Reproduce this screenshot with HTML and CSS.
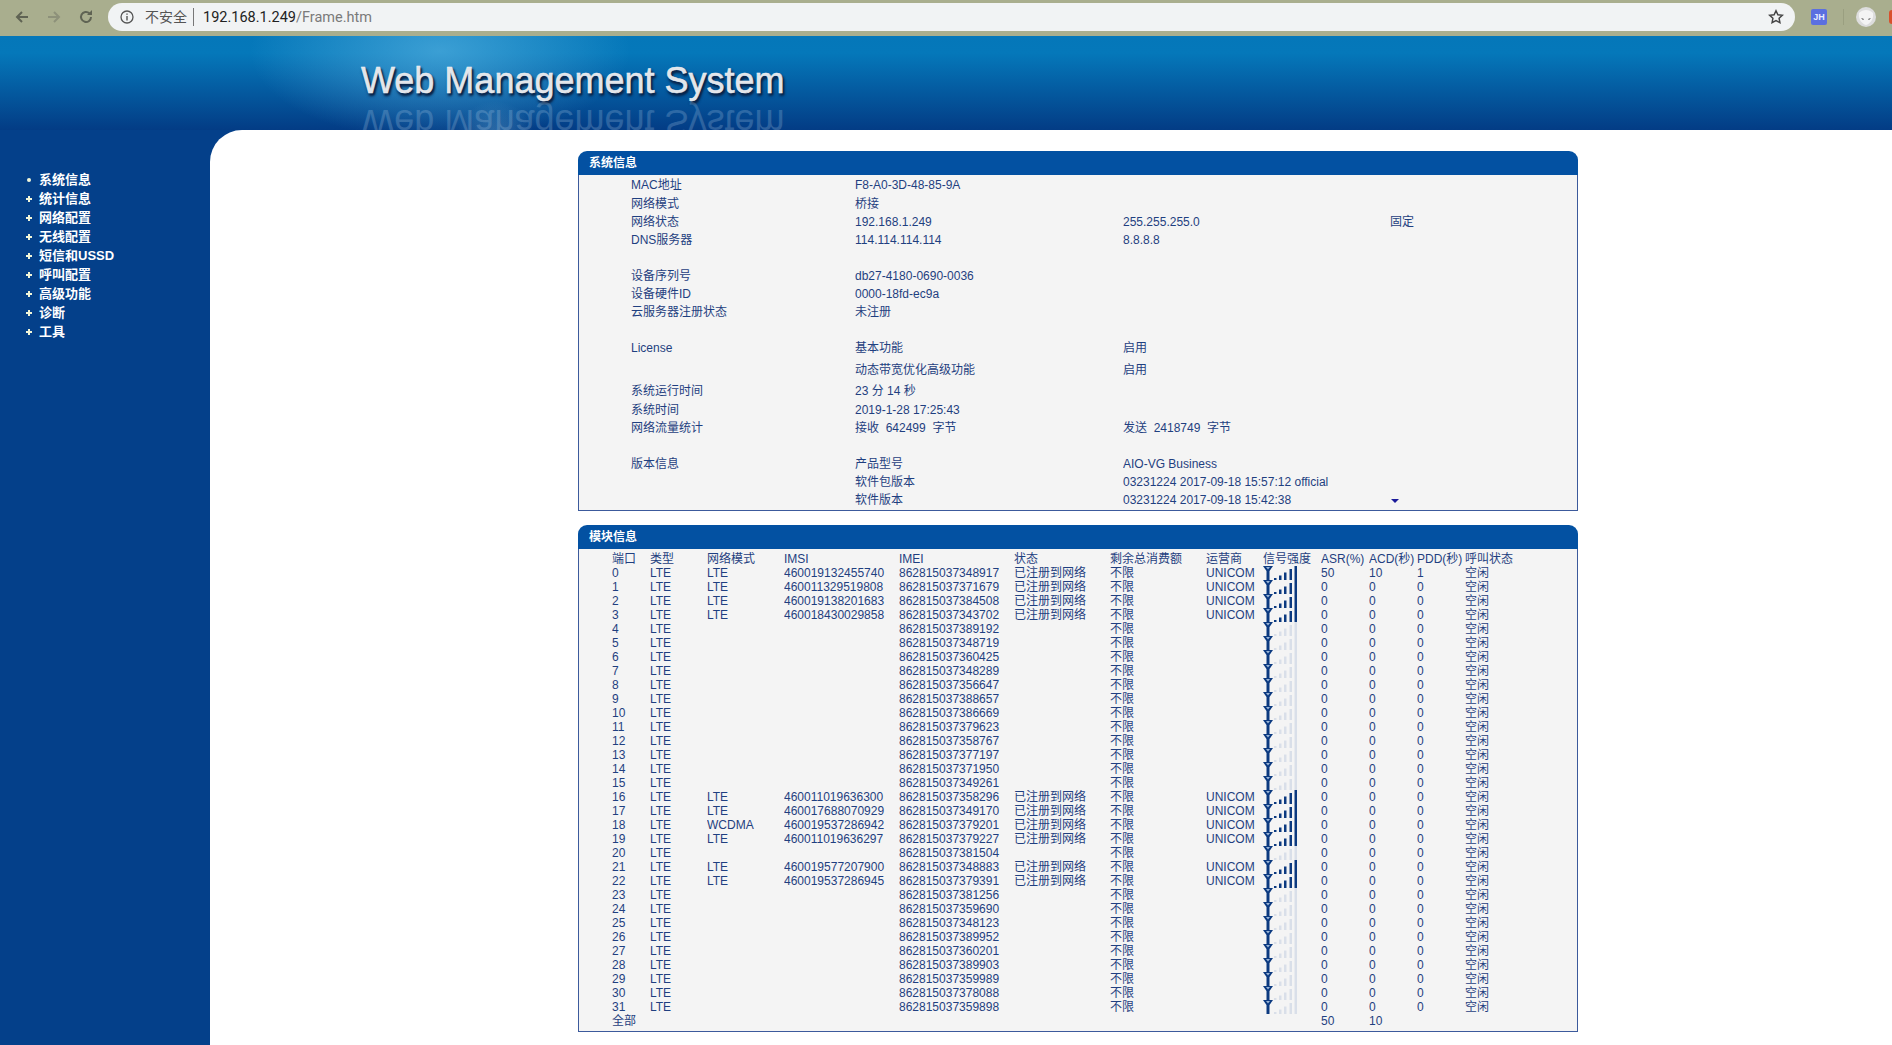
FILE: index.html
```html
<!DOCTYPE html>
<html lang="zh-CN">
<head>
    <meta charset="UTF-8">
    <title>Web Management System</title>
    <link rel="stylesheet" href="styles.css">
</head>
<body>
    <svg class="defs" width="0" height="0">
        <symbol id="sig-on" viewBox="0 0 34 14">
            <path d="M0 0h10L6.500 5v9h-3V5z" fill="#0c3a80"/>
            <path d="M3 1h4L5 3.500z" fill="#9db7d8"/>
            <path d="M11 12h2.500v2H11zM16 9.500h2.500V14H16zM21 6.500h2.500V14H21zM26.500 3H29v11h-2.500zM31.500 0H34v14h-2.500z" fill="#0c3a80"/>
        </symbol>
        <symbol id="sig-off" viewBox="0 0 34 14">
            <path d="M0 0h10L6.500 5v9h-3V5z" fill="#0c3a80"/>
            <path d="M3 1h4L5 3.500z" fill="#9db7d8"/>
            <path d="M11 12h2.500v2H11zM16 9.500h2.500V14H16zM21 6.500h2.500V14H21zM26.500 3H29v11h-2.500zM31.500 0H34v14h-2.500z" fill="#d9dfe9"/>
        </symbol>
    </svg>

    <!-- browser bar -->
    <div class="chrome">
        <div class="nav">
            <svg width="16" height="16" viewBox="0 0 16 16"><path d="M14 8H3M8 3L3 8l5 5" fill="none" stroke="#5f6353" stroke-width="2"/></svg>
            <svg width="16" height="16" viewBox="0 0 16 16"><path d="M2 8h11M8 3l5 5-5 5" fill="none" stroke="#8d917a" stroke-width="2"/></svg>
            <svg width="16" height="16" viewBox="0 0 16 16"><path d="M13 8a5 5 0 1 1-1.600-3.700" fill="none" stroke="#5f6353" stroke-width="2"/><path d="M14 1v5H9z" fill="#5f6353"/></svg>
        </div>
        <div class="omnibox">
            <svg class="info" width="14" height="14" viewBox="0 0 14 14"><circle cx="7" cy="7" r="6" fill="none" stroke="#555" stroke-width="1.300"/><path d="M6.300 6h1.400v4.500H6.300zM6.300 3.400h1.400v1.400H6.300z" fill="#555"/></svg>
            <span class="insecure">不安全</span>
            <span class="url"><b>192.168.1.249</b>/Frame.htm</span>
            <svg class="star" width="16" height="16" viewBox="0 0 16 16"><path d="M8 1.800l1.900 4 4.400.5-3.200 3 .8 4.400L8 11.600l-3.900 2.100.8-4.400-3.200-3 4.400-.5z" fill="none" stroke="#444" stroke-width="1.500"/></svg>
        </div>
        <div class="ext-jh">JH</div>
        <div class="ext-sep"></div>
        <div class="avatar">
            <svg width="20" height="20" viewBox="0 0 20 20"><circle cx="10" cy="10" r="10" fill="#ddd"/><path d="M3 6c4-4 10-4 14 0 1 6-3 11-7 12C6 17 2 12 3 6z" fill="#f4f4f4"/><path d="M5 11l3 1-1 1zM15 11l-3 1 1 1z" fill="#444"/></svg>
        </div>
        <div class="ext-red"></div>
    </div>

    <div class="banner">
        <div class="banner-title">Web Management System</div>
        <div class="banner-mirror" aria-hidden="true">Web Management System</div>
    </div>

    <div class="page">
        <ul class="sidebar">
            <li class="first">系统信息</li>
            <li>统计信息</li>
            <li>网络配置</li>
            <li>无线配置</li>
            <li>短信和USSD</li>
            <li>呼叫配置</li>
            <li>高级功能</li>
            <li>诊断</li>
            <li>工具</li>
        </ul>

        <div class="content">
            <div class="panel">
                <div class="panel-title">系统信息</div>
                <div class="panel-body info-body">
                    <table class="info-table">
                        <colgroup><col class="i1"><col class="i2"><col class="i3"><col class="i4"></colgroup>
                        <tr class="top"><td>MAC地址</td><td>F8-A0-3D-48-85-9A</td><td></td><td></td></tr>
                        <tr><td>网络模式</td><td>桥接</td><td></td><td></td></tr>
                        <tr><td>网络状态</td><td>192.168.1.249</td><td>255.255.255.0</td><td>固定</td></tr>
                        <tr><td>DNS服务器</td><td>114.114.114.114</td><td>8.8.8.8</td><td></td></tr>
                        <tr class="gap"><td colspan="4"></td></tr>
                        <tr><td>设备序列号</td><td>db27-4180-0690-0036</td><td></td><td></td></tr>
                        <tr><td>设备硬件ID</td><td>0000-18fd-ec9a</td><td></td><td></td></tr>
                        <tr><td>云服务器注册状态</td><td>未注册</td><td></td><td></td></tr>
                        <tr class="gap-big"><td colspan="4"></td></tr>
                        <tr><td>License</td><td>基本功能</td><td>启用</td><td></td></tr>
                        <tr class="tall"><td></td><td>动态带宽优化高级功能</td><td>启用</td><td></td></tr>
                        <tr class="mid"><td>系统运行时间</td><td>23 分 14 秒</td><td></td><td></td></tr>
                        <tr><td>系统时间</td><td>2019-1-28 17:25:43</td><td></td><td></td></tr>
                        <tr><td>网络流量统计</td><td>接收&nbsp; 642499&nbsp; 字节</td><td>发送&nbsp; 2418749&nbsp; 字节</td><td></td></tr>
                        <tr class="gap-big"><td colspan="4"></td></tr>
                        <tr><td>版本信息</td><td>产品型号</td><td>AIO-VG Business</td><td></td></tr>
                        <tr><td></td><td>软件包版本</td><td>03231224 2017-09-18 15:57:12 official</td><td></td></tr>
                        <tr><td></td><td>软件版本</td><td>03231224 2017-09-18 15:42:38</td><td><span class="caret"></span></td></tr>
                    </table>
                </div>
            </div>

            <div class="panel">
                <div class="panel-title">模块信息</div>
                <div class="panel-body module-body">
                    <table class="module-table">
                        <colgroup><col class="m1"><col class="m2"><col class="m3"><col class="m4"><col class="m5"><col class="m6"><col class="m7"><col class="m8"><col class="m9"><col class="m10"><col class="m11"><col class="m12"><col></colgroup>
                        <tr><th>端口</th><th>类型</th><th>网络模式</th><th>IMSI</th><th>IMEI</th><th>状态</th><th>剩余总消费额</th><th>运营商</th><th>信号强度</th><th>ASR(%)</th><th>ACD(秒)</th><th>PDD(秒)</th><th>呼叫状态</th></tr>
                        <tr><td>0</td><td>LTE</td><td>LTE</td><td>460019132455740</td><td>862815037348917</td><td>已注册到网络</td><td>不限</td><td>UNICOM</td><td><svg class="sig"><use href="#sig-on"/></svg></td><td>50</td><td>10</td><td>1</td><td>空闲</td></tr>
                        <tr><td>1</td><td>LTE</td><td>LTE</td><td>460011329519808</td><td>862815037371679</td><td>已注册到网络</td><td>不限</td><td>UNICOM</td><td><svg class="sig"><use href="#sig-on"/></svg></td><td>0</td><td>0</td><td>0</td><td>空闲</td></tr>
                        <tr><td>2</td><td>LTE</td><td>LTE</td><td>460019138201683</td><td>862815037384508</td><td>已注册到网络</td><td>不限</td><td>UNICOM</td><td><svg class="sig"><use href="#sig-on"/></svg></td><td>0</td><td>0</td><td>0</td><td>空闲</td></tr>
                        <tr><td>3</td><td>LTE</td><td>LTE</td><td>460018430029858</td><td>862815037343702</td><td>已注册到网络</td><td>不限</td><td>UNICOM</td><td><svg class="sig"><use href="#sig-on"/></svg></td><td>0</td><td>0</td><td>0</td><td>空闲</td></tr>
                        <tr><td>4</td><td>LTE</td><td></td><td></td><td>862815037389192</td><td></td><td>不限</td><td></td><td><svg class="sig"><use href="#sig-off"/></svg></td><td>0</td><td>0</td><td>0</td><td>空闲</td></tr>
                        <tr><td>5</td><td>LTE</td><td></td><td></td><td>862815037348719</td><td></td><td>不限</td><td></td><td><svg class="sig"><use href="#sig-off"/></svg></td><td>0</td><td>0</td><td>0</td><td>空闲</td></tr>
                        <tr><td>6</td><td>LTE</td><td></td><td></td><td>862815037360425</td><td></td><td>不限</td><td></td><td><svg class="sig"><use href="#sig-off"/></svg></td><td>0</td><td>0</td><td>0</td><td>空闲</td></tr>
                        <tr><td>7</td><td>LTE</td><td></td><td></td><td>862815037348289</td><td></td><td>不限</td><td></td><td><svg class="sig"><use href="#sig-off"/></svg></td><td>0</td><td>0</td><td>0</td><td>空闲</td></tr>
                        <tr><td>8</td><td>LTE</td><td></td><td></td><td>862815037356647</td><td></td><td>不限</td><td></td><td><svg class="sig"><use href="#sig-off"/></svg></td><td>0</td><td>0</td><td>0</td><td>空闲</td></tr>
                        <tr><td>9</td><td>LTE</td><td></td><td></td><td>862815037388657</td><td></td><td>不限</td><td></td><td><svg class="sig"><use href="#sig-off"/></svg></td><td>0</td><td>0</td><td>0</td><td>空闲</td></tr>
                        <tr><td>10</td><td>LTE</td><td></td><td></td><td>862815037386669</td><td></td><td>不限</td><td></td><td><svg class="sig"><use href="#sig-off"/></svg></td><td>0</td><td>0</td><td>0</td><td>空闲</td></tr>
                        <tr><td>11</td><td>LTE</td><td></td><td></td><td>862815037379623</td><td></td><td>不限</td><td></td><td><svg class="sig"><use href="#sig-off"/></svg></td><td>0</td><td>0</td><td>0</td><td>空闲</td></tr>
                        <tr><td>12</td><td>LTE</td><td></td><td></td><td>862815037358767</td><td></td><td>不限</td><td></td><td><svg class="sig"><use href="#sig-off"/></svg></td><td>0</td><td>0</td><td>0</td><td>空闲</td></tr>
                        <tr><td>13</td><td>LTE</td><td></td><td></td><td>862815037377197</td><td></td><td>不限</td><td></td><td><svg class="sig"><use href="#sig-off"/></svg></td><td>0</td><td>0</td><td>0</td><td>空闲</td></tr>
                        <tr><td>14</td><td>LTE</td><td></td><td></td><td>862815037371950</td><td></td><td>不限</td><td></td><td><svg class="sig"><use href="#sig-off"/></svg></td><td>0</td><td>0</td><td>0</td><td>空闲</td></tr>
                        <tr><td>15</td><td>LTE</td><td></td><td></td><td>862815037349261</td><td></td><td>不限</td><td></td><td><svg class="sig"><use href="#sig-off"/></svg></td><td>0</td><td>0</td><td>0</td><td>空闲</td></tr>
                        <tr><td>16</td><td>LTE</td><td>LTE</td><td>460011019636300</td><td>862815037358296</td><td>已注册到网络</td><td>不限</td><td>UNICOM</td><td><svg class="sig"><use href="#sig-on"/></svg></td><td>0</td><td>0</td><td>0</td><td>空闲</td></tr>
                        <tr><td>17</td><td>LTE</td><td>LTE</td><td>460017688070929</td><td>862815037349170</td><td>已注册到网络</td><td>不限</td><td>UNICOM</td><td><svg class="sig"><use href="#sig-on"/></svg></td><td>0</td><td>0</td><td>0</td><td>空闲</td></tr>
                        <tr><td>18</td><td>LTE</td><td>WCDMA</td><td>460019537286942</td><td>862815037379201</td><td>已注册到网络</td><td>不限</td><td>UNICOM</td><td><svg class="sig"><use href="#sig-on"/></svg></td><td>0</td><td>0</td><td>0</td><td>空闲</td></tr>
                        <tr><td>19</td><td>LTE</td><td>LTE</td><td>460011019636297</td><td>862815037379227</td><td>已注册到网络</td><td>不限</td><td>UNICOM</td><td><svg class="sig"><use href="#sig-on"/></svg></td><td>0</td><td>0</td><td>0</td><td>空闲</td></tr>
                        <tr><td>20</td><td>LTE</td><td></td><td></td><td>862815037381504</td><td></td><td>不限</td><td></td><td><svg class="sig"><use href="#sig-off"/></svg></td><td>0</td><td>0</td><td>0</td><td>空闲</td></tr>
                        <tr><td>21</td><td>LTE</td><td>LTE</td><td>460019577207900</td><td>862815037348883</td><td>已注册到网络</td><td>不限</td><td>UNICOM</td><td><svg class="sig"><use href="#sig-on"/></svg></td><td>0</td><td>0</td><td>0</td><td>空闲</td></tr>
                        <tr><td>22</td><td>LTE</td><td>LTE</td><td>460019537286945</td><td>862815037379391</td><td>已注册到网络</td><td>不限</td><td>UNICOM</td><td><svg class="sig"><use href="#sig-on"/></svg></td><td>0</td><td>0</td><td>0</td><td>空闲</td></tr>
                        <tr><td>23</td><td>LTE</td><td></td><td></td><td>862815037381256</td><td></td><td>不限</td><td></td><td><svg class="sig"><use href="#sig-off"/></svg></td><td>0</td><td>0</td><td>0</td><td>空闲</td></tr>
                        <tr><td>24</td><td>LTE</td><td></td><td></td><td>862815037359690</td><td></td><td>不限</td><td></td><td><svg class="sig"><use href="#sig-off"/></svg></td><td>0</td><td>0</td><td>0</td><td>空闲</td></tr>
                        <tr><td>25</td><td>LTE</td><td></td><td></td><td>862815037348123</td><td></td><td>不限</td><td></td><td><svg class="sig"><use href="#sig-off"/></svg></td><td>0</td><td>0</td><td>0</td><td>空闲</td></tr>
                        <tr><td>26</td><td>LTE</td><td></td><td></td><td>862815037389952</td><td></td><td>不限</td><td></td><td><svg class="sig"><use href="#sig-off"/></svg></td><td>0</td><td>0</td><td>0</td><td>空闲</td></tr>
                        <tr><td>27</td><td>LTE</td><td></td><td></td><td>862815037360201</td><td></td><td>不限</td><td></td><td><svg class="sig"><use href="#sig-off"/></svg></td><td>0</td><td>0</td><td>0</td><td>空闲</td></tr>
                        <tr><td>28</td><td>LTE</td><td></td><td></td><td>862815037389903</td><td></td><td>不限</td><td></td><td><svg class="sig"><use href="#sig-off"/></svg></td><td>0</td><td>0</td><td>0</td><td>空闲</td></tr>
                        <tr><td>29</td><td>LTE</td><td></td><td></td><td>862815037359989</td><td></td><td>不限</td><td></td><td><svg class="sig"><use href="#sig-off"/></svg></td><td>0</td><td>0</td><td>0</td><td>空闲</td></tr>
                        <tr><td>30</td><td>LTE</td><td></td><td></td><td>862815037378088</td><td></td><td>不限</td><td></td><td><svg class="sig"><use href="#sig-off"/></svg></td><td>0</td><td>0</td><td>0</td><td>空闲</td></tr>
                        <tr><td>31</td><td>LTE</td><td></td><td></td><td>862815037359898</td><td></td><td>不限</td><td></td><td><svg class="sig"><use href="#sig-off"/></svg></td><td>0</td><td>0</td><td>0</td><td>空闲</td></tr>
                        <tr><td>全部</td><td></td><td></td><td></td><td></td><td></td><td></td><td></td><td></td><td>50</td><td>10</td><td></td><td></td></tr>
                    </table>
                </div>
            </div>
        </div>
    </div>
</body>
</html>
```

FILE: styles.css
```css
body {
    margin: 0;
    height: 1045px;
    overflow: hidden;
    background-color: #fff;
    font-family: "Liberation Sans", "Noto Sans CJK SC", sans-serif;
    font-size: 12px;
    color: #1f3f80;
    display: flex;
    flex-direction: column;
}

.defs {
    position: absolute;
}

/* browser bar */
.chrome {
    height: 36px;
    flex: none;
    display: flex;
    align-items: center;
    background-color: #a9ae8e;
    box-sizing: border-box;
    padding: 0 0 2px 14px;
}

.nav {
    display: flex;
    gap: 16px;
    width: 94px;
}

.omnibox {
    width: 1687px;
    height: 28px;
    border-radius: 14px;
    background-color: #f1f3f4;
    display: flex;
    align-items: center;
    font-family: Roboto, "Noto Sans CJK SC", sans-serif;
    color: #555;
}

.info {
    margin-left: 12px;
}

.insecure {
    margin-left: 11px;
    font-size: 14px;
    width: 48px;
    border-right: 1px solid #777;
    line-height: 18px;
}

.url {
    margin-left: 9px;
    font-size: 14.5px;
    color: #7a7a7a;
}

.url b {
    font-weight: 400;
    color: #222;
}

.star {
    margin-left: auto;
    margin-right: 11px;
}

.ext-jh {
    width: 16px;
    height: 16px;
    margin-left: 16px;
    background-color: #5b6fe0;
    color: #e8ecff;
    font-size: 9px;
    font-weight: bold;
    line-height: 16px;
    text-align: center;
    border-radius: 2px;
}

.ext-sep {
    width: 1px;
    height: 16px;
    margin-left: 16px;
    background-color: #9a9f80;
}

.avatar {
    width: 20px;
    height: 20px;
    margin-left: 12px;
}

.ext-red {
    width: 3px;
    height: 14px;
    margin-left: 13px;
    background-color: #d9502c;
    border-radius: 3px 0 0 3px;
}

/* header */
.banner {
    position: relative;
    height: 94px;
    flex: none;
    overflow: hidden;
    box-sizing: border-box;
    padding: 25px 0 0 361px;
    background:
        radial-gradient(ellipse 40px 40px at 495px 105px, rgba(120, 190, 225, 0.4), rgba(120, 190, 225, 0) 100%),
        radial-gradient(ellipse 190px 90px at 440px 15px, rgba(95, 185, 230, 0.6), rgba(95, 185, 230, 0) 100%),
        linear-gradient(#0577b9 0%, #0578ba 18%, #033c85 100%);
}

.banner-title,
.banner-mirror {
    font-size: 36px;
    line-height: 40px;
    white-space: nowrap;
}

.banner-title {
    color: #e2e5ea;
    -webkit-text-stroke: 0.5px #eef0f3;
    text-shadow: 2px 2px 2px #0a2348, 1px 3px 3px #0a2348;
}

.banner-mirror {
    position: absolute;
    left: 361px;
    top: 66px;
    color: #a9c8e4;
    opacity: 0.25;
    transform: scaleY(-1);
}

/* main area */
.page {
    flex: 1;
    display: flex;
    background-color: #04408a;
}

.sidebar {
    width: 210px;
    flex: none;
    box-sizing: border-box;
    margin: 0;
    padding: 40px 0 0 24px;
    list-style: none;
    color: #fff;
    font-size: 13px;
    font-weight: bold;
}

.sidebar li {
    height: 19px;
    line-height: 19px;
    padding-left: 15px;
    position: relative;
}

/* little plus marks in front of the menu */
.sidebar li::before {
    content: "";
    position: absolute;
    left: 2px;
    top: 9px;
    width: 6px;
    height: 2px;
    background-color: #f2f6d8;
}

.sidebar li::after {
    content: "";
    position: absolute;
    left: 4px;
    top: 7px;
    width: 2px;
    height: 6px;
    background-color: #f2f6d8;
}

.sidebar li.first::before {
    left: 3px;
    top: 8px;
    width: 4px;
    height: 4px;
    border-radius: 2px;
}

.sidebar li.first::after {
    display: none;
}

.content {
    flex: 1;
    background-color: #fff;
    border-top-left-radius: 32px;
    padding: 21px 0 0 368px;
}

.panel {
    width: 1000px;
    margin-bottom: 14px;
}

.panel-title {
    height: 24px;
    line-height: 24px;
    padding-left: 11px;
    background-color: #0351a2;
    color: #fff;
    font-weight: bold;
    border-radius: 9px 9px 0 0;
}

.panel-body {
    background-color: #f4f4f4;
    border: 1px solid #3c5a9c;
    border-top: none;
    white-space: nowrap;
}

.info-body {
    height: 336px;
    padding-top: 1px;
    box-sizing: border-box;
}

.module-body {
    height: 483px;
    padding: 3px 0 0 33px;
    box-sizing: border-box;
}

table {
    border-collapse: collapse;
    table-layout: fixed;
    border-spacing: 0;
}

td,
th {
    padding: 0;
    font-weight: normal;
    text-align: left;
    overflow: hidden;
}

.info-table {
    width: 998px;
}

.info-table tr {
    height: 18px;
}

.info-table td {
    line-height: 18px;
}

.info-table tr.top {
    height: 19px;
}

.info-table tr.top td,
.info-table tr.mid td {
    vertical-align: top;
}

.info-table tr.gap {
    height: 18px;
}

.info-table tr.gap-big {
    height: 18px;
}

.info-table tr.tall {
    height: 26px;
}

.info-table tr.mid td {
    line-height: 16px;
}

.i1 {
    width: 276px;
}

.i2 {
    width: 268px;
}

.i3 {
    width: 267px;
}

.info-table td:first-child {
    padding-left: 52px;
}

.caret {
    display: inline-block;
    margin-left: 1px;
    border: 4px solid transparent;
    border-top: 4px solid #1a1a9a;
    border-bottom: none;
    vertical-align: middle;
}

.module-table {
    width: 965px;
}

.module-table tr {
    height: 14px;
}

.module-table td,
.module-table th {
    height: 14px;
    line-height: 14px;
}

.m1 { width: 38px; }
.m2 { width: 57px; }
.m3 { width: 77px; }
.m4 { width: 115px; }
.m5 { width: 115px; }
.m6 { width: 96px; }
.m7 { width: 96px; }
.m8 { width: 57px; }
.m9 { width: 58px; }
.m10 { width: 48px; }
.m11 { width: 48px; }
.m12 { width: 48px; }

.sig {
    display: block;
    width: 34px;
    height: 14px;
}
```
